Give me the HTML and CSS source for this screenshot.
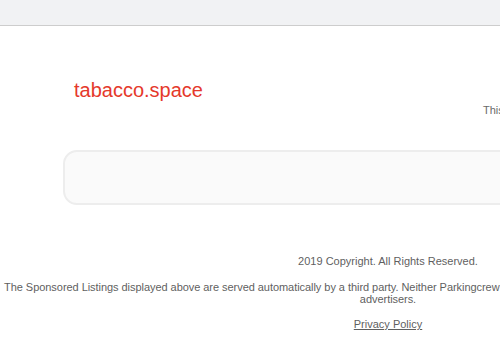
FILE: index.html
```html
<!DOCTYPE html>
<html lang="en">
<head>
<meta charset="utf-8">
<title>tabacco.space</title>
<link rel="stylesheet" href="styles.css">
</head>
<body>
<div class="page">
  <div class="topbar"></div>
  <div class="header">
    <h1 class="title">tabacco.space</h1>
    <div class="sale">This domain may be for sale!</div>
  </div>
  <div class="ads"></div>
  <div class="footer">
    <p class="copy">2019 Copyright. All Rights Reserved.</p>
    <p class="disclaimer">The Sponsored Listings displayed above are served automatically by a third party. Neither Parkingcrew nor the domain owner maintain any relationship with the<br>advertisers.</p>
    <p class="privacy"><a href="#">Privacy Policy</a></p>
  </div>
</div>
</body>
</html>
```
FILE: styles.css
```css
html, body {
  margin: 0;
  padding: 0;
  overflow: hidden;
  background: #ffffff;
  font-family: "Liberation Sans", Arial, sans-serif;
}
.page {
  width: 776px;
}
.topbar {
  height: 25px;
  background: #f1f2f4;
  border-bottom: 1px solid #cdcdcd;
}
.header {
  display: grid;
  grid-template-columns: 483px 1fr;
  margin-top: 53px;
}
.title {
  margin: 0;
  padding-left: 74px;
  font-size: 20px;
  line-height: 23px;
  font-weight: normal;
  color: #e5392b;
}
.sale {
  padding-top: 25px;
  font-size: 11px;
  line-height: 13px;
  color: #6a6a6a;
  white-space: nowrap;
}
.ads {
  margin: 33px 0 0 63px;
  width: 650px;
  height: 51px;
  border: 2px solid #ededed;
  border-radius: 14px;
  background: #fafafa;
}
.footer {
  text-align: center;
  font-size: 11px;
  line-height: 12px;
  color: #5f5f5f;
}
.footer p {
  margin: 0;
}
.copy {
  padding-top: 50px;
}
.disclaimer {
  margin-top: 14px !important;
  white-space: nowrap;
  letter-spacing: -0.05px;
}
.privacy {
  margin-top: 13px !important;
}
.privacy a {
  color: #5f5f5f;
  text-decoration: underline;
}
```
